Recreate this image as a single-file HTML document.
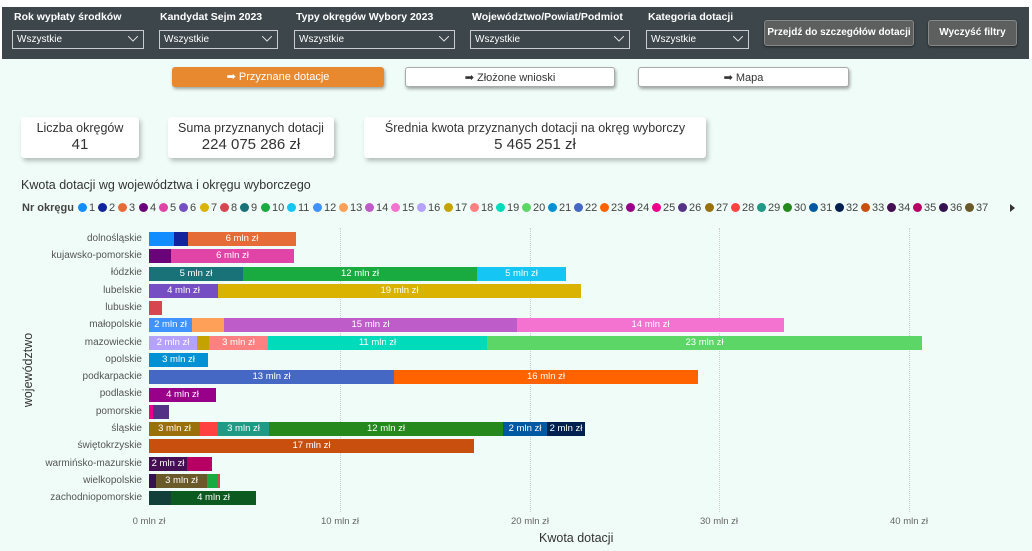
<!DOCTYPE html>
<html><head><meta charset="utf-8"><style>
*{margin:0;padding:0;box-sizing:border-box}
body{width:1032px;height:551px;background:#fff;font-family:"Liberation Sans",sans-serif;position:relative;overflow:hidden}
.bg{position:absolute;left:0;top:59px;width:1032px;height:492px;background:#f0fcf8}
.hdr{position:absolute;left:2px;top:7px;width:1027px;height:52px;background:#3c464b}
.lbl{position:absolute;top:11px;color:#fff;font-weight:bold;font-size:10.5px}
.dd{position:absolute;top:30px;height:19px;border:1px solid #c8ccce;color:#fff;font-size:10px;padding:3px 0 0 4px}
.dd svg{position:absolute;right:5px;top:5px}
.hb{position:absolute;top:20px;height:26px;background:#5d5e5e;border:1px solid #888;border-radius:3px;color:#fff;font-weight:bold;font-size:10px;text-align:center;line-height:24px;box-shadow:0 1px 2px rgba(0,0,0,.5)}
.tb{position:absolute;top:67px;height:20px;border-radius:3px;font-size:11px;text-align:center;line-height:20px;box-shadow:1px 2px 3px rgba(0,0,0,.35)}
.card{position:absolute;top:117px;height:41px;background:#fff;border-radius:3px;box-shadow:2px 3px 5px rgba(0,0,0,.25);text-align:center;color:#333}
.card .t{font-size:12.5px;margin-top:4px}
.card .v{font-size:15px;margin-top:1px}
.leg{position:absolute;top:202px;font-size:11px;color:#444;white-space:nowrap;line-height:13px}
.leg i{display:inline-block;width:9px;height:9px;border-radius:50%;vertical-align:-1px;margin-right:2px}
.row{position:absolute;left:149px;height:14px;display:flex}
.row div{height:14px;color:#fff;font-size:9.5px;text-align:center;line-height:14px;overflow:hidden;white-space:nowrap}
.cat{position:absolute;right:890px;font-size:10px;color:#555;text-align:right;white-space:nowrap}
.grid{position:absolute;top:228px;height:284px;border-left:1px dotted #ccc}
.ax{position:absolute;top:516px;font-size:9.5px;color:#666;transform:translateX(-50%)}
</style></head><body>
<div class="bg"></div>
<div class="hdr"></div>
<div class="lbl" style="left:14px">Rok wypłaty środków</div>
<div class="lbl" style="left:160px">Kandydat Sejm 2023</div>
<div class="lbl" style="left:296px">Typy okręgów Wybory 2023</div>
<div class="lbl" style="left:472px">Województwo/Powiat/Podmiot</div>
<div class="lbl" style="left:648px">Kategoria dotacji</div>
<div class="dd" style="left:12px;width:132px">Wszystkie<svg width="10" height="6"><path d="M0 0L5 5L10 0" stroke="#ddd" fill="none"/></svg></div>
<div class="dd" style="left:159px;width:119px">Wszystkie<svg width="10" height="6"><path d="M0 0L5 5L10 0" stroke="#ddd" fill="none"/></svg></div>
<div class="dd" style="left:294px;width:161px">Wszystkie<svg width="10" height="6"><path d="M0 0L5 5L10 0" stroke="#ddd" fill="none"/></svg></div>
<div class="dd" style="left:470px;width:160px">Wszystkie<svg width="10" height="6"><path d="M0 0L5 5L10 0" stroke="#ddd" fill="none"/></svg></div>
<div class="dd" style="left:646px;width:103px">Wszystkie<svg width="10" height="6"><path d="M0 0L5 5L10 0" stroke="#ddd" fill="none"/></svg></div>
<div class="hb" style="left:764px;width:150px">Przejdź do szczegółów dotacji</div>
<div class="hb" style="left:928px;width:89px">Wyczyść filtry</div>

<div class="tb" style="left:172px;width:212px;background:#e8892f;color:#fff">➡ Przyznane dotacje</div>
<div class="tb" style="left:405px;width:210px;background:#fff;border:1px solid #aaa;color:#333">➡ Złożone wnioski</div>
<div class="tb" style="left:638px;width:211px;background:#fff;border:1px solid #aaa;color:#333">➡ Mapa</div>

<div class="card" style="left:21px;width:118px"><div class="t">Liczba okręgów</div><div class="v">41</div></div>
<div class="card" style="left:168px;width:166px"><div class="t">Suma przyznanych dotacji</div><div class="v">224 075 286 zł</div></div>
<div class="card" style="left:364px;width:342px"><div class="t">Średnia kwota przyznanych dotacji na okręg wyborczy</div><div class="v">5 465 251 zł</div></div>

<div style="position:absolute;left:21px;top:178px;font-size:12.5px;color:#333">Kwota dotacji wg województwa i okręgu wyborczego</div>

<div class="leg" style="left:22px"><b style="color:#444">Nr okręgu</b></div>
<div class="leg" style="left:78px;word-spacing:0">
<span style="position:absolute;left:0"><i style="background:#118dff"></i>1</span>
<span style="position:absolute;left:20px"><i style="background:#12239e"></i>2</span>
<span style="position:absolute;left:40px"><i style="background:#e66c37"></i>3</span>
<span style="position:absolute;left:61px"><i style="background:#6b007b"></i>4</span>
<span style="position:absolute;left:81px"><i style="background:#e044a7"></i>5</span>
<span style="position:absolute;left:101px"><i style="background:#744ec2"></i>6</span>
<span style="position:absolute;left:122px"><i style="background:#d9b300"></i>7</span>
<span style="position:absolute;left:142px"><i style="background:#d64550"></i>8</span>
<span style="position:absolute;left:162px"><i style="background:#197278"></i>9</span>
<span style="position:absolute;left:183px"><i style="background:#1aab40"></i>10</span>
<span style="position:absolute;left:209px"><i style="background:#15c6f4"></i>11</span>
<span style="position:absolute;left:235px"><i style="background:#4092ff"></i>12</span>
<span style="position:absolute;left:261px"><i style="background:#ffa058"></i>13</span>
<span style="position:absolute;left:287px"><i style="background:#be5dc9"></i>14</span>
<span style="position:absolute;left:313px"><i style="background:#f472d0"></i>15</span>
<span style="position:absolute;left:339px"><i style="background:#b5a1ff"></i>16</span>
<span style="position:absolute;left:366px"><i style="background:#c4a200"></i>17</span>
<span style="position:absolute;left:392px"><i style="background:#ff8080"></i>18</span>
<span style="position:absolute;left:418px"><i style="background:#00dbbc"></i>19</span>
<span style="position:absolute;left:444px"><i style="background:#5bd667"></i>20</span>
<span style="position:absolute;left:470px"><i style="background:#0091d5"></i>21</span>
<span style="position:absolute;left:496px"><i style="background:#4668c5"></i>22</span>
<span style="position:absolute;left:522px"><i style="background:#ff6300"></i>23</span>
<span style="position:absolute;left:548px"><i style="background:#99008a"></i>24</span>
<span style="position:absolute;left:574px"><i style="background:#ec008c"></i>25</span>
<span style="position:absolute;left:600px"><i style="background:#533285"></i>26</span>
<span style="position:absolute;left:627px"><i style="background:#99700a"></i>27</span>
<span style="position:absolute;left:653px"><i style="background:#ff4141"></i>28</span>
<span style="position:absolute;left:679px"><i style="background:#1f9a85"></i>29</span>
<span style="position:absolute;left:705px"><i style="background:#25891c"></i>30</span>
<span style="position:absolute;left:731px"><i style="background:#0057a2"></i>31</span>
<span style="position:absolute;left:757px"><i style="background:#002050"></i>32</span>
<span style="position:absolute;left:783px"><i style="background:#c94f0f"></i>33</span>
<span style="position:absolute;left:809px"><i style="background:#450f54"></i>34</span>
<span style="position:absolute;left:835px"><i style="background:#b60064"></i>35</span>
<span style="position:absolute;left:861px"><i style="background:#34124f"></i>36</span>
<span style="position:absolute;left:887px"><i style="background:#6a5a29"></i>37</span>
</div>
<div style="position:absolute;left:1010px;top:204px;width:0;height:0;border-left:5px solid #333;border-top:4px solid transparent;border-bottom:4px solid transparent"></div>

<div class="grid" style="left:340px"></div>
<div class="grid" style="left:530px"></div>
<div class="grid" style="left:719px"></div>
<div class="grid" style="left:909px"></div>

<div class="cat" style="top:233px">dolnośląskie</div>
<div class="cat" style="top:250px">kujawsko-pomorskie</div>
<div class="cat" style="top:267px">łódzkie</div>
<div class="cat" style="top:285px">lubelskie</div>
<div class="cat" style="top:302px">lubuskie</div>
<div class="cat" style="top:319px">małopolskie</div>
<div class="cat" style="top:337px">mazowieckie</div>
<div class="cat" style="top:354px">opolskie</div>
<div class="cat" style="top:371px">podkarpackie</div>
<div class="cat" style="top:388px">podlaskie</div>
<div class="cat" style="top:406px">pomorskie</div>
<div class="cat" style="top:423px">śląskie</div>
<div class="cat" style="top:440px">świętokrzyskie</div>
<div class="cat" style="top:458px">warmińsko-mazurskie</div>
<div class="cat" style="top:475px">wielkopolskie</div>
<div class="cat" style="top:492px">zachodniopomorskie</div>

<div class="row" style="top:232px"><div style="width:25px;background:#118dff"></div><div style="width:14px;background:#12239e"></div><div style="width:108px;background:#e66c37">6 mln zł</div></div>
<div class="row" style="top:249px"><div style="width:22px;background:#6b007b"></div><div style="width:123px;background:#e044a7">6 mln zł</div></div>
<div class="row" style="top:267px"><div style="width:94px;background:#197278">5 mln zł</div><div style="width:234px;background:#1aab40">12 mln zł</div><div style="width:89px;background:#15c6f4">5 mln zł</div></div>
<div class="row" style="top:284px"><div style="width:69px;background:#744ec2">4 mln zł</div><div style="width:363px;background:#d9b300">19 mln zł</div></div>
<div class="row" style="top:301px"><div style="width:13px;background:#d64550"></div></div>
<div class="row" style="top:318px"><div style="width:43px;background:#4092ff">2 mln zł</div><div style="width:32px;background:#ffa058"></div><div style="width:293px;background:#be5dc9">15 mln zł</div><div style="width:267px;background:#f472d0">14 mln zł</div></div>
<div class="row" style="top:336px"><div style="width:48px;background:#b5a1ff">2 mln zł</div><div style="width:12px;background:#c4a200"></div><div style="width:59px;background:#ff8080">3 mln zł</div><div style="width:219px;background:#00dbbc">11 mln zł</div><div style="width:435px;background:#5bd667">23 mln zł</div></div>
<div class="row" style="top:353px"><div style="width:59px;background:#0091d5">3 mln zł</div></div>
<div class="row" style="top:370px"><div style="width:245px;background:#4668c5">13 mln zł</div><div style="width:304px;background:#ff6300">16 mln zł</div></div>
<div class="row" style="top:388px"><div style="width:67px;background:#99008a">4 mln zł</div></div>
<div class="row" style="top:405px"><div style="width:4px;background:#ec008c"></div><div style="width:16px;background:#533285"></div></div>
<div class="row" style="top:422px"><div style="width:51px;background:#99700a">3 mln zł</div><div style="width:18px;background:#ff4141"></div><div style="width:51px;background:#1f9a85">3 mln zł</div><div style="width:234px;background:#25891c">12 mln zł</div><div style="width:44px;background:#0057a2">2 mln zł</div><div style="width:38px;background:#002050">2 mln zł</div></div>
<div class="row" style="top:439px"><div style="width:325px;background:#c94f0f">17 mln zł</div></div>
<div class="row" style="top:457px"><div style="width:38px;background:#450f54">2 mln zł</div><div style="width:25px;background:#b60064"></div></div>
<div class="row" style="top:474px"><div style="width:7px;background:#34124f"></div><div style="width:51px;background:#6a5a29">3 mln zł</div><div style="width:11px;background:#1aab40"></div><div style="width:2px;background:#d64550"></div></div>
<div class="row" style="top:491px"><div style="width:22px;background:#123f3a"></div><div style="width:85px;background:#0c5a20">4 mln zł</div></div>

<div class="ax" style="left:149px">0 mln zł</div>
<div class="ax" style="left:340px">10 mln zł</div>
<div class="ax" style="left:530px">20 mln zł</div>
<div class="ax" style="left:719px">30 mln zł</div>
<div class="ax" style="left:909px">40 mln zł</div>
<div style="position:absolute;left:539px;top:531px;font-size:12.5px;color:#333">Kwota dotacji</div>
<div style="position:absolute;left:28px;top:370px;font-size:12.5px;color:#333;transform:translate(-50%,-50%) rotate(-90deg);white-space:nowrap">województwo</div>
</body></html>
